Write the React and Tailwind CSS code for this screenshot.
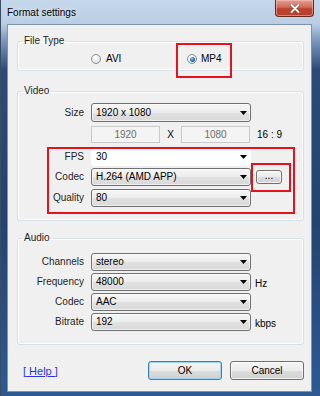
import React from 'react';

const comboBg =
  'border border-[#707070] bg-[linear-gradient(to_bottom,#f6f6f6_0%,#ececec_50%,#e1e1e1_51%,#d9d9d9_100%)] shadow-[inset_0_0_0_1px_rgba(255,255,255,0.6)]';

function Arrow() {
  return (
    <svg width="7" height="4" viewBox="0 0 7 4" className="shrink-0">
      <polygon points="0,0 7,0 3.5,4" fill="#000" />
    </svg>
  );
}

function Combo({ value, white = false, height = 'h-[18px]' }) {
  return (
    <div
      className={`ml-[7px] flex w-[160px] ${height} items-center justify-between rounded-[3px] pl-[4px] pr-[3px] ${
        white ? 'border border-white bg-white' : comboBg
      }`}
    >
      <span className="text-[10px] leading-[12px] text-black">{value}</span>
      <Arrow />
    </div>
  );
}

function Label({ children }) {
  return <span className="w-[66px] shrink-0 text-right text-[10px] leading-[12px] text-[#1e1e1e]">{children}</span>;
}

function Radio({ checked }) {
  return (
    <span className="flex h-[10px] w-[10px] items-center justify-center rounded-full border border-[#8e8f8f] bg-[radial-gradient(circle_at_40%_35%,#ffffff_0%,#e6e6e6_60%,#cfcfcf_100%)]">
      {checked && (
        <span className="h-[5px] w-[5px] rounded-full bg-[radial-gradient(circle_at_40%_35%,#8fd0ff_0%,#2a7fc0_45%,#0d3d6b_100%)]" />
      )}
    </span>
  );
}

function Group({ title, className, children }) {
  return (
    <fieldset className={`ml-[9px] w-[287px] rounded-[3px] border border-[#d5dfe5] shadow-[inset_0_0_0_1px_#ffffff] ${className}`}>
      <legend className="ml-[4px] px-[2px] text-[10px] leading-[12px] text-[#1e1e1e]">{title}</legend>
      {children}
    </fieldset>
  );
}

function Button({ children, primary, className = '' }) {
  return (
    <div
      className={`flex items-center justify-center rounded-[3px] border bg-[linear-gradient(to_bottom,#f6f6f6_0%,#ebebeb_50%,#dddddd_51%,#d0d0d0_100%)] text-[10px] leading-[12px] text-black ${
        primary
          ? 'border-[#3c7fb1] shadow-[inset_0_0_0_1px_#9fd3f4]'
          : 'border-[#707070] shadow-[inset_0_0_0_1px_rgba(255,255,255,0.7)]'
      } ${className}`}
    >
      {children}
    </div>
  );
}

export default function App() {
  const audioRows = [
    { label: 'Channels', value: 'stereo', unit: '' },
    { label: 'Frequency', value: '48000', unit: 'Hz' },
    { label: 'Codec', value: 'AAC', unit: '' },
    { label: 'Bitrate', value: '192', unit: 'kbps' },
  ];

  return (
    <div className="relative flex h-[396px] w-[320px] flex-col overflow-hidden border-l border-[#3a4c66] bg-[linear-gradient(to_bottom,#c6d7eb_0px,#b9cde4_24px,#7d98bd_40px,#2c4a76_70px,#24436f_220px,#2d5a94_396px)] font-['Liberation_Sans',Arial,sans-serif]">
      {/* title bar */}
      <div className="flex h-[24px] shrink-0 items-start justify-between">
        <span className="pl-[6px] pt-[7px] text-[10px] leading-[12px] text-black [text-shadow:0_0_6px_#ffffff]">
          Format settings
        </span>
        <div className="mr-[6px] flex h-[17px] w-[39px] items-center justify-center rounded-b-[4px] border border-t-0 border-[#6b2a20] bg-[linear-gradient(to_bottom,#e4a094_0%,#d06a58_45%,#c0402c_55%,#b8402e_100%)] shadow-[inset_0_0_0_1px_rgba(255,200,190,0.5)]">
          <svg width="10" height="9" viewBox="0 0 10 9">
            <path d="M1.5 1 L8.5 8 M8.5 1 L1.5 8" stroke="#5a1a10" strokeWidth="3.2" strokeLinecap="round" opacity="0.5" />
            <path d="M1.5 1 L8.5 8 M8.5 1 L1.5 8" stroke="#ffffff" strokeWidth="2" strokeLinecap="round" />
          </svg>
        </div>
      </div>

      {/* client area */}
      <div className="mb-[4px] ml-[6px] flex w-[305px] flex-1 flex-col border border-[#7f92ab] bg-[#f0f0f0]">
        <Group title="File Type" className="mt-[10px] pb-[5px] pt-[6px]">
          <div className="flex h-[12px] items-center pl-[73px]">
            <div className="flex w-[96px] items-center gap-[5px]">
              <Radio />
              <span className="text-[10px] leading-[12px] text-black">AVI</span>
            </div>
            <div className="flex items-center gap-[4px]">
              <Radio checked />
              <span className="text-[10px] leading-[12px] text-black">MP4</span>
            </div>
          </div>
        </Group>

        <Group title="Video" className="mt-[14px] pb-[13px] pt-[6px]">
          <div className="flex h-[19px] items-center">
            <Label>Size</Label>
            <Combo value="1920 x 1080" height="h-[19px]" />
          </div>
          <div className="mt-[4px] flex h-[17px] items-center pl-[73px]">
            <div className="flex h-[17px] w-[69px] items-center justify-center border border-[#c9c9c9] bg-[#f4f4f4] text-[10px] leading-[12px] text-[#6d6d6d]">
              1920
            </div>
            <span className="w-[21px] text-center text-[10px] leading-[12px] text-black">X</span>
            <div className="flex h-[17px] w-[69px] items-center justify-center border border-[#c9c9c9] bg-[#f4f4f4] text-[10px] leading-[12px] text-[#6d6d6d]">
              1080
            </div>
            <span className="ml-[7px] text-[10px] leading-[12px] text-black">16 : 9</span>
          </div>
          <div className="mt-[5px] flex h-[18px] items-center">
            <Label>FPS</Label>
            <Combo value="30" white />
          </div>
          <div className="mt-[2px] flex h-[18px] items-center">
            <Label>Codec</Label>
            <Combo value="H.264 (AMD APP)" />
            <Button className="ml-[5px] h-[14px] w-[26px] pb-[3px]">...</Button>
          </div>
          <div className="mt-[3px] flex h-[18px] items-center">
            <Label>Quality</Label>
            <Combo value="80" />
          </div>
        </Group>

        <Group title="Audio" className="mt-[11px] flex flex-col gap-[2px] pb-[13px] pt-[9px]">
          {audioRows.map((row) => (
            <div key={row.label} className="flex h-[18px] items-center">
              <Label>{row.label}</Label>
              <Combo value={row.value} />
              {row.unit && <span className="ml-[4px] pt-[3px] text-[10px] leading-[12px] text-black">{row.unit}</span>}
            </div>
          ))}
        </Group>

        <div className="ml-[15px] mt-[16px] flex h-[19px] w-[281px] items-center">
          <span className="text-[11px] leading-[12px] text-[#2a35e0] underline">[ Help ]</span>
          <Button primary className="ml-auto h-[19px] w-[74px]">OK</Button>
          <Button className="ml-[8px] h-[19px] w-[74px]">Cancel</Button>
        </div>
      </div>

      {/* red annotation boxes */}
      <div className="absolute left-[175px] top-[43px] h-[35px] w-[56px] border-2 border-[#e3121c]" />
      <div className="absolute left-[46px] top-[147px] h-[67px] w-[248px] border-2 border-[#e3121c]" />
      <div className="absolute left-[250px] top-[163px] h-[29px] w-[40px] border-2 border-[#e3121c]" />
    </div>
  );
}
